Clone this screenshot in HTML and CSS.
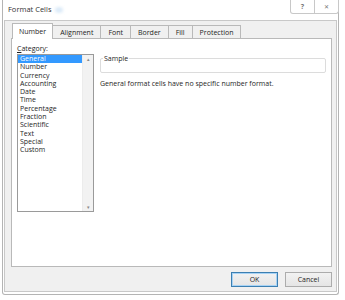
FILE: index.html
```html
<!DOCTYPE html>
<html>
<head>
<meta charset="utf-8">
<link rel="stylesheet" href="styles.css">
</head>
<body>
<div class="window">
  <div class="titlebar">
    <span class="title">Format Cells</span>
    <span class="glint"></span>
    <div class="caption-btns">
      <span class="cbtn">?</span>
      <span class="cbtn close">&#x2715;</span>
    </div>
  </div>
  <div class="body">
    <div class="tabs">
      <span class="tab active">Number</span>
      <span class="tab">Alignment</span>
      <span class="tab">Font</span>
      <span class="tab">Border</span>
      <span class="tab">Fill</span>
      <span class="tab">Protection</span>
    </div>
    <div class="panel">
      <div class="left">
        <div class="label"><u>C</u>ategory:</div>
        <div class="listbox">
          <ul class="items">
            <li class="sel">General</li>
            <li>Number</li>
            <li>Currency</li>
            <li>Accounting</li>
            <li>Date</li>
            <li>Time</li>
            <li>Percentage</li>
            <li>Fraction</li>
            <li>Scientific</li>
            <li>Text</li>
            <li>Special</li>
            <li>Custom</li>
          </ul>
          <div class="scroll">
            <span class="arrow">&#x25B4;</span>
            <span class="arrow">&#x25BE;</span>
          </div>
        </div>
      </div>
      <div class="right">
        <fieldset class="sample">
          <legend>Sample</legend>
        </fieldset>
        <p class="desc">General format cells have no specific number format.</p>
      </div>
    </div>
    <div class="footer">
      <button class="btn default">OK</button>
      <button class="btn">Cancel</button>
    </div>
  </div>
</div>
</body>
</html>
```
FILE: styles.css
```css
html, body {
  margin: 0;
  padding: 0;
  background: #ffffff;
}
body {
  font-family: "Open Sans", "Noto Sans", sans-serif;
  font-size: 7px;
  color: #1e1e1e;
  padding: 0 0 0 2px;
}
.window {
  width: 337px;
  height: 295px;
  border: 1px solid #b4b4b4;
  border-top: none;
  border-radius: 0 0 3px 3px;
  box-sizing: border-box;
  display: flex;
  flex-direction: column;
  background: #ffffff;
}
.titlebar {
  height: 20px;
  display: flex;
  align-items: center;
  padding-left: 5px;
}
.title {
  font-size: 7.5px;
  color: #333;
  margin-top: -2px;
}
.glint {
  width: 8px;
  height: 6px;
  margin-left: 4px;
  border-radius: 50%;
  background: #dbeaf8;
  filter: blur(1.5px);
}
.caption-btns {
  margin-left: auto;
  margin-right: -1px;
  align-self: flex-start;
  display: flex;
  border: 1px solid #c8c8c8;
  border-top: none;
  border-radius: 0 0 3px 3px;
  height: 13px;
}
.cbtn {
  width: 23px;
  display: flex;
  align-items: center;
  justify-content: center;
  color: #777;
  font-size: 7px;
  font-weight: bold;
}
.cbtn.close {
  border-left: 1px solid #c8c8c8;
  font-size: 6px;
  font-weight: normal;
}
.body {
  flex: 1;
  margin: 0 1px 2px 1px;
  border: 1px solid #c8c8c8;
  background: #f0f0f0;
  display: flex;
  flex-direction: column;
  padding: 2px 4px 0 6px;
}
.tabs {
  display: flex;
  height: 15px;
  align-items: flex-end;
  padding-left: 2px;
  position: relative;
  z-index: 1;
}
.tab {
  height: 13px;
  box-sizing: border-box;
  border: 1px solid #b9b9b9;
  border-bottom: none;
  margin-left: -1px;
  padding: 0 7px;
  background: #f0f0f0;
  display: flex;
  align-items: center;
  font-size: 7px;
}
.tab.active {
  height: 16px;
  background: #ffffff;
  margin-bottom: -1px;
  padding: 0 6px;
  z-index: 2;
  position: relative;
}
.panel {
  height: 229px;
  box-sizing: border-box;
  border: 1px solid #b9b9b9;
  background: #ffffff;
  display: flex;
  padding: 6px 5px 0 5px;
}
.left {
  width: 77px;
}
.label {
  height: 8px;
  line-height: 8px;
  margin-bottom: 1px;
}
.listbox {
  height: 158px;
  box-sizing: border-box;
  border: 1px solid #9a9a9a;
  display: flex;
}
.items {
  list-style: none;
  margin: 0;
  padding: 0;
  flex: 1;
}
.items li {
  height: 8.3px;
  line-height: 8.3px;
  padding-left: 2px;
}
.items li.sel {
  background: #3399ff;
  color: #ffffff;
}
.scroll {
  width: 10px;
  display: flex;
  flex-direction: column;
  justify-content: space-between;
  background: #f2f2f2;
  border-left: 1px solid #ececec;
}
.arrow {
  font-size: 5px;
  color: #888;
  text-align: center;
  line-height: 8px;
}
.right {
  flex: 1;
  margin-left: 6px;
}
.sample {
  margin: 10px 0 0 0;
  padding: 0;
  height: 18px;
  border: 1px solid #dcdcdc;
  border-radius: 2px;
  box-sizing: border-box;
}
.sample legend {
  padding: 0 1px;
  margin-left: 2px;
  font-size: 7px;
  line-height: 7px;
}
.desc {
  margin: 6px 0 0 0;
  line-height: 9px;
}
.footer {
  flex: 1;
  display: flex;
  justify-content: flex-end;
  align-items: center;
  gap: 7px;
  padding-right: 0;
}
.btn {
  width: 47px;
  height: 15px;
  font-family: inherit;
  font-size: 7px;
  color: #1e1e1e;
  border: 1px solid #acacac;
  background: linear-gradient(#f2f2f2, #e5e5e5);
  padding: 0;
}
.btn.default {
  border-color: #3c7fb1;
  box-shadow: inset 0 0 0 1px #a8d3f5;
}
```
